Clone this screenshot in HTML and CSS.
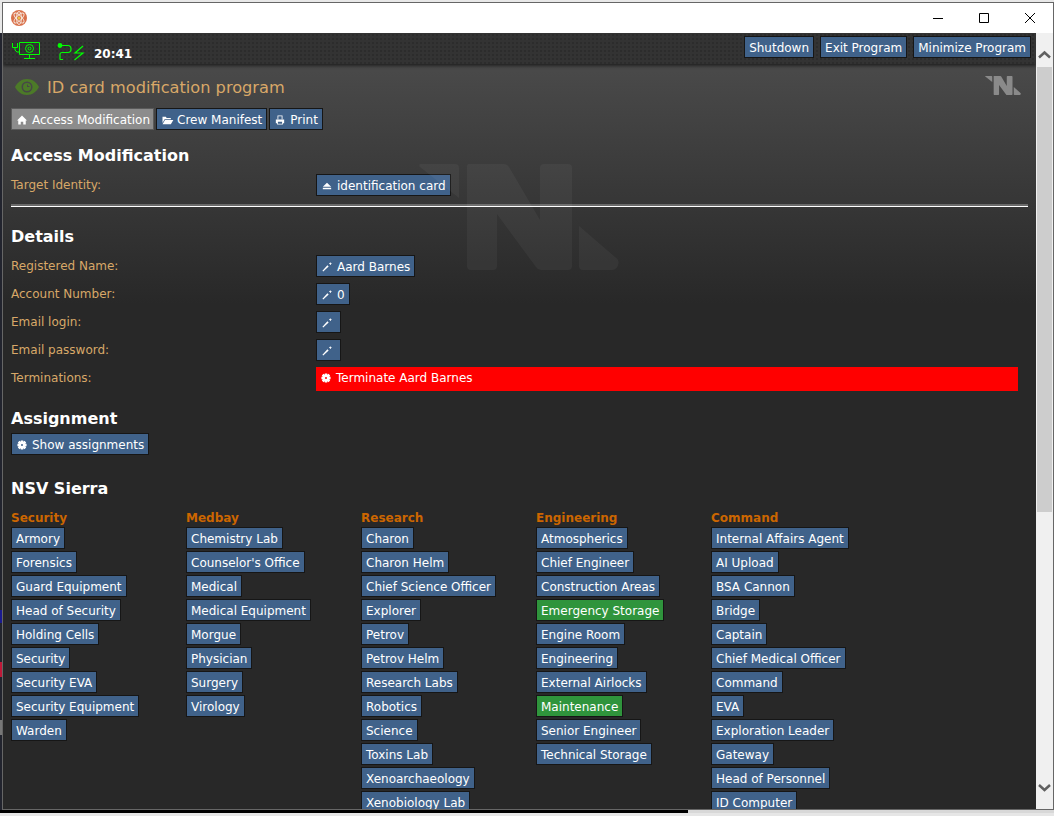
FILE: index.html
```html
<!doctype html>
<html lang="en">
<head>
<meta charset="utf-8">
<title>ID card modification program</title>
<link rel="stylesheet" href="styles.css">
</head>

<body>
<svg class="defs" width="0" height="0">
  <symbol id="i-home" viewBox="0 0 12 12"><path d="M6 .5 12 6.500H10.500V11.500H7.500V8H4.500V11.500H1.500V6.500H0z"/></symbol>
  <symbol id="i-folder" viewBox="0 0 14 12"><path d="M1 2h4l1 1.500h5V5H3.500L1 9.500zM4 6h10l-3 5H1z"/></symbol>
  <symbol id="i-print" viewBox="0 0 12 12"><path d="M3 .5h6v4.500H8V1.500H4V5H3zM1 5.500h10V10H9.500v1.500h-7V10H1zM3.500 8v2.500h5V8z"/></symbol>
  <symbol id="i-eject" viewBox="0 0 12 12"><path d="M6 2 11 7H1zM1 8h10v2H1z"/></symbol>
  <symbol id="i-pencil" viewBox="0 0 12 12"><path d="M.5 10.500 1.500 11.500 8 5.500 6.500 4zM9.500 .5h1v1h1v1h-1v1h-1v-1h-1v-1h1z"/></symbol>
  <symbol id="i-gear" viewBox="0 0 12 12"><path fill-rule="evenodd" d="M4.500 .5h3V2L9 1 11 3 10 4.500h1.500v3H10L11 9 9 11 7.500 10v1.500h-3V10L3 11 1 9 2 7.500H.5v-3H2L1 3 3 1l1.500 1zM6 4.800A1.200 1.200 0 1 0 6 7.200 1.200 1.200 0 1 0 6 4.800z"/></symbol>
</svg>

<div class="window">
  <div class="titlebar">
    <svg class="appicon" width="16" height="16" viewBox="0 0 16 16">
      <circle cx="8" cy="8" r="8" fill="#d9704a"/>
      <g fill="none" stroke="#f6e4d8" stroke-width="1">
        <ellipse cx="8" cy="8" rx="6.500" ry="2.500" transform="rotate(45 8 8)"/>
        <ellipse cx="8" cy="8" rx="6.500" ry="2.500" transform="rotate(-45 8 8)"/>
        <ellipse cx="8" cy="8" rx="2.500" ry="6.500"/>
      </g>
      <circle cx="8" cy="8" r="1.500" fill="#e8c04a"/>
    </svg>
    <div class="winctl">
      <svg width="46" height="30" viewBox="0 0 46 30"><path d="M18 15.500h10" stroke="#000" fill="none"/></svg>
      <svg width="46" height="30" viewBox="0 0 46 30"><path d="M18.500 10.500h9v9h-9z" stroke="#000" fill="none"/></svg>
      <svg width="46" height="30" viewBox="0 0 46 30"><path d="M18 10l10 10M28 10l-10 10" stroke="#000" fill="none"/></svg>
    </div>
  </div>

  <div class="view">
    <div class="main">
      <div class="statusbar">
        <div class="status-left">
          <svg width="30" height="20" viewBox="0 0 30 20" fill="none" stroke="#0f0" stroke-width="1">
            <path d="M2.500 2v4.500h5V2M5 6.500V9l2 2h2M9.500 1.500h20v12h-20zM19.500 13.500v4M14 17.500h11"/>
            <circle cx="19.500" cy="7.500" r="4"/>
            <circle cx="19.500" cy="7.500" r="1.500"/>
          </svg>
          <svg class="plug" width="28" height="20" viewBox="0 0 28 20" fill="none" stroke="#0f0" stroke-width="1.200">
            <path d="M4 4.500h7a3 3 0 0 1 3 3v1a3 3 0 0 1-3 3H5a2 2 0 0 0-2 2v4.500a.5.5 0 0 0 .5.5H6"/>
            <circle cx="3" cy="4.500" r="1.800" fill="#0f0"/>
            <path d="M26 5 18 12h8l-8.500 7"/>
          </svg>
          <b class="clock">20:41</b>
        </div>
        <div class="status-right">
          <a class="btn">Shutdown</a>
          <a class="btn">Exit Program</a>
          <a class="btn">Minimize Program</a>
        </div>
      </div>

      <div class="content">
        <svg class="watermark" width="200" height="106" viewBox="0 0 200 106">
          <path d="M4 0h32a4 4 0 0 1 4 4v30L1 3a2 2 0 0 1 3-3zM49 0h36a6 6 0 0 1 5 3l31 53V4a4 4 0 0 1 4-4h24a4 4 0 0 1 4 4v98a4 4 0 0 1-4 4h-27a6 6 0 0 1-5-3L78 50v52a4 4 0 0 1-4 4H52a4 4 0 0 1-4-4V4a4 4 0 0 1 1-4zM160 62l36 31a7 7 0 0 1-4 13h-28a4 4 0 0 1-4-4z"/>
        </svg>
        <svg class="logo" width="36" height="19" viewBox="0 0 200 106">
          <path d="M4 0h32a4 4 0 0 1 4 4v30L1 3a2 2 0 0 1 3-3zM49 0h36a6 6 0 0 1 5 3l31 53V4a4 4 0 0 1 4-4h24a4 4 0 0 1 4 4v98a4 4 0 0 1-4 4h-27a6 6 0 0 1-5-3L78 50v52a4 4 0 0 1-4 4H52a4 4 0 0 1-4-4V4a4 4 0 0 1 1-4zM160 62l36 31a7 7 0 0 1-4 13h-28a4 4 0 0 1-4-4z"/>
        </svg>

        <div class="program-title">
          <svg class="eye" width="24" height="16" viewBox="0 0 24 16">
            <path fill-rule="evenodd" d="M12 0c5.500 0 9.500 3.500 12 8-2.500 4.500-6.500 8-12 8S2.500 12.500 0 8c2.500-4.500 6.500-8 12-8zM12 2.500a5.500 5.500 0 1 0 0 11 5.500 5.500 0 0 0 0-11z"/>
            <path fill-rule="evenodd" d="M12 4a4 4 0 1 1 0 8 4 4 0 0 1 0-8zM12 5.500V8h2.500v-1H13V5.500z"/>
          </svg>
          <span>ID card modification program</span>
        </div>

        <div class="tabs">
          <a class="btn selected"><svg class="ic"><use href="#i-home"/></svg>Access Modification</a>
          <a class="btn"><svg class="ic ic-wide"><use href="#i-folder"/></svg>Crew Manifest</a>
          <a class="btn"><svg class="ic"><use href="#i-print"/></svg>Print</a>
        </div>

        <h2 class="first">Access Modification</h2>
        <div class="row">
          <div class="lbl">Target Identity:</div>
          <div><a class="btn"><svg class="ic"><use href="#i-eject"/></svg>identification card</a></div>
        </div>
        <hr>

        <h2>Details</h2>
        <div class="row">
          <div class="lbl">Registered Name:</div>
          <div><a class="btn"><svg class="ic"><use href="#i-pencil"/></svg>Aard Barnes</a></div>
        </div>
        <div class="row">
          <div class="lbl">Account Number:</div>
          <div><a class="btn"><svg class="ic"><use href="#i-pencil"/></svg>0</a></div>
        </div>
        <div class="row">
          <div class="lbl">Email login:</div>
          <div><a class="btn btn-icon"><svg class="ic"><use href="#i-pencil"/></svg></a></div>
        </div>
        <div class="row">
          <div class="lbl">Email password:</div>
          <div><a class="btn btn-icon"><svg class="ic"><use href="#i-pencil"/></svg></a></div>
        </div>
        <div class="row row-term">
          <div class="lbl">Terminations:</div>
          <a class="terminate"><svg class="ic"><use href="#i-gear"/></svg>Terminate Aard Barnes</a>
        </div>

        <h2 class="assign">Assignment</h2>
        <a class="btn"><svg class="ic"><use href="#i-gear"/></svg>Show assignments</a>

        <h2 class="ship">NSV Sierra</h2>
        <div class="depts">
          <div class="dept">
            <h3>Security</h3>
            <a class="btn">Armory</a>
            <a class="btn">Forensics</a>
            <a class="btn">Guard Equipment</a>
            <a class="btn">Head of Security</a>
            <a class="btn">Holding Cells</a>
            <a class="btn">Security</a>
            <a class="btn">Security EVA</a>
            <a class="btn">Security Equipment</a>
            <a class="btn">Warden</a>
          </div>
          <div class="dept">
            <h3>Medbay</h3>
            <a class="btn">Chemistry Lab</a>
            <a class="btn">Counselor's Office</a>
            <a class="btn">Medical</a>
            <a class="btn">Medical Equipment</a>
            <a class="btn">Morgue</a>
            <a class="btn">Physician</a>
            <a class="btn">Surgery</a>
            <a class="btn">Virology</a>
          </div>
          <div class="dept">
            <h3>Research</h3>
            <a class="btn">Charon</a>
            <a class="btn">Charon Helm</a>
            <a class="btn">Chief Science Officer</a>
            <a class="btn">Explorer</a>
            <a class="btn">Petrov</a>
            <a class="btn">Petrov Helm</a>
            <a class="btn">Research Labs</a>
            <a class="btn">Robotics</a>
            <a class="btn">Science</a>
            <a class="btn">Toxins Lab</a>
            <a class="btn">Xenoarchaeology</a>
            <a class="btn">Xenobiology Lab</a>
          </div>
          <div class="dept">
            <h3>Engineering</h3>
            <a class="btn">Atmospherics</a>
            <a class="btn">Chief Engineer</a>
            <a class="btn">Construction Areas</a>
            <a class="btn on">Emergency Storage</a>
            <a class="btn">Engine Room</a>
            <a class="btn">Engineering</a>
            <a class="btn">External Airlocks</a>
            <a class="btn on">Maintenance</a>
            <a class="btn">Senior Engineer</a>
            <a class="btn">Technical Storage</a>
          </div>
          <div class="dept">
            <h3>Command</h3>
            <a class="btn">Internal Affairs Agent</a>
            <a class="btn">AI Upload</a>
            <a class="btn">BSA Cannon</a>
            <a class="btn">Bridge</a>
            <a class="btn">Captain</a>
            <a class="btn">Chief Medical Officer</a>
            <a class="btn">Command</a>
            <a class="btn">EVA</a>
            <a class="btn">Exploration Leader</a>
            <a class="btn">Gateway</a>
            <a class="btn">Head of Personnel</a>
            <a class="btn">ID Computer</a>
          </div>
        </div>
      </div>
    </div>

    <div class="scrollbar">
      <svg width="17" height="17" viewBox="0 0 17 17"><path d="M3 10.500 8.500 5.500 14 10.500" fill="none" stroke="#606060" stroke-width="2.500"/></svg>
      <div class="thumb"></div>
      <div class="track"></div>
      <svg width="17" height="17" viewBox="0 0 17 17"><path d="M3 6 8.500 11 14 6" fill="none" stroke="#606060" stroke-width="2.500"/></svg>
    </div>
  </div>
</div>
<div class="desk-strip"></div>
</body>
</html>
```

FILE: styles.css
```css
html,
body {
  margin: 0;
  height: 100%;
  overflow: hidden;
  font-family: "DejaVu Sans", Verdana, sans-serif;
  font-size: 12px;
  color: #fff;
}

/* desktop peeking out left of the window */
body {
  background: linear-gradient(#e8e8e8 33px, #22242e 33px, #22242e 610px, #1a1a90 610px, #1a1a90 623px, #22242e 623px, #22242e 662px, #c01838 662px, #c01838 677px, #22242e 677px, #22242e 720px, #777 720px, #777 735px, #22242e 735px, #22242e 810px, #e6e6e6 810px);
}

.defs {
  display: block;
  height: 0;
}

.window {
  height: 808px;
  margin: 2px 0 0 2px;
  border: 1px solid #666;
  display: flex;
  flex-direction: column;
  box-sizing: border-box;
}

.desk-strip {
  height: 3px;
  background: linear-gradient(90deg, #000 688px, #d8d8d8 688px);
}

.titlebar {
  height: 30px;
  flex: none;
  background: #fff;
  display: flex;
  align-items: center;
  justify-content: space-between;
  padding-left: 8px;
}
.winctl {
  display: flex;
}

.view {
  flex: 1;
  min-height: 0;
  display: flex;
}

.main {
  flex: 1;
  min-width: 0;
  display: flex;
  flex-direction: column;
  overflow: hidden;
  background: #282828;
}

.statusbar {
  height: 31px;
  flex: none;
  box-sizing: border-box;
  padding: 3px 5px 0 7px;
  display: flex;
  justify-content: space-between;
  align-items: flex-start;
  background-color: #333;
  background-image: radial-gradient(#2c2c2c 1px, transparent 1px);
  background-size: 4px 4px;
  box-shadow: 0 2px 3px #222;
  position: relative;
  z-index: 1;
}
.status-left {
  display: flex;
  align-items: flex-start;
  padding-top: 5px;
}
.plug {
  margin-left: 17px;
}
.clock {
  margin-left: 9px;
  padding-top: 6px;
  font-size: 12px;
}
.status-right {
  display: flex;
  gap: 6px;
}

.content {
  position: relative;
  flex: 1;
  min-height: 0;
  padding: 0 8px;
  overflow: hidden;
  background: linear-gradient(#4a4a4a, #282828 240px);
}
.watermark {
  position: absolute;
  left: 416px;
  top: 100px;
  fill: #fff;
  opacity: 0.04;
}
.logo {
  position: absolute;
  right: 15px;
  top: 12px;
  fill: #8a8a8a;
}

.program-title {
  display: flex;
  align-items: center;
  gap: 8px;
  height: 44px;
  box-sizing: border-box;
  padding: 2px 0 0 4px;
  font-size: 16.200px;
  color: #d8a868;
}
.eye {
  fill: #4c7a28;
}

.btn {
  display: inline-block;
  box-sizing: border-box;
  height: 22px;
  line-height: 20px;
  padding: 1px 4px 0;
  background: #40628a;
  border: 1px solid #161616;
  color: #fff;
  white-space: nowrap;
}
.btn.selected {
  background: #8c8c8c;
  border-color: #5a5a5a;
  padding-right: 3px;
}
.btn.on {
  background: #2f943c;
}
.btn-icon {
  padding-right: 3px;
}

.ic {
  width: 10px;
  height: 10px;
  fill: #fff;
  margin: 0 5px 0 1px;
  vertical-align: -1px;
}
.ic-wide {
  width: 13px;
  margin: 0 3px 0 0;
}

.tabs {
  display: flex;
  gap: 2px;
}

h2 {
  margin: 0 0 7px;
  font-size: 16px;
  line-height: 22px;
}
h2.first {
  margin-top: 15px;
  margin-bottom: 7px;
}

.row {
  display: grid;
  grid-template-columns: 305px 1fr;
  height: 28px;
}
.lbl {
  color: #d8a868;
  line-height: 20px;
  padding-top: 1px;
}
.row-term {
  height: 24px;
}
.terminate {
  height: 24px;
  line-height: 22px;
  padding-left: 4px;
  margin-right: 10px;
  background: #f00;
}

hr {
  border: 0;
  border-top: 2px solid #6a6a6a;
  border-bottom: 1px solid #fff;
  height: 0;
  margin: 2px 0 19px;
}

h2.assign {
  margin-top: 17px;
  margin-bottom: 3px;
}
h2.ship {
  margin-top: 23px;
  margin-bottom: 9px;
}

.depts {
  display: flex;
}
.dept {
  width: 175px;
  flex: none;
  display: flex;
  flex-direction: column;
  align-items: flex-start;
  gap: 2px;
}
.dept h3 {
  margin: 0;
  font-size: 12px;
  line-height: 18px;
  color: #cc6600;
  height: 16px;
}

.scrollbar {
  width: 17px;
  flex: none;
  box-sizing: border-box;
  padding: 14px 0 13px;
  background: #f0f0f0;
  display: flex;
  flex-direction: column;
}
.thumb {
  height: 445px;
  margin: 3px 0 0 1px;
  width: 15px;
  background: #cdcdcd;
}
.track {
  flex: 1;
}
```
